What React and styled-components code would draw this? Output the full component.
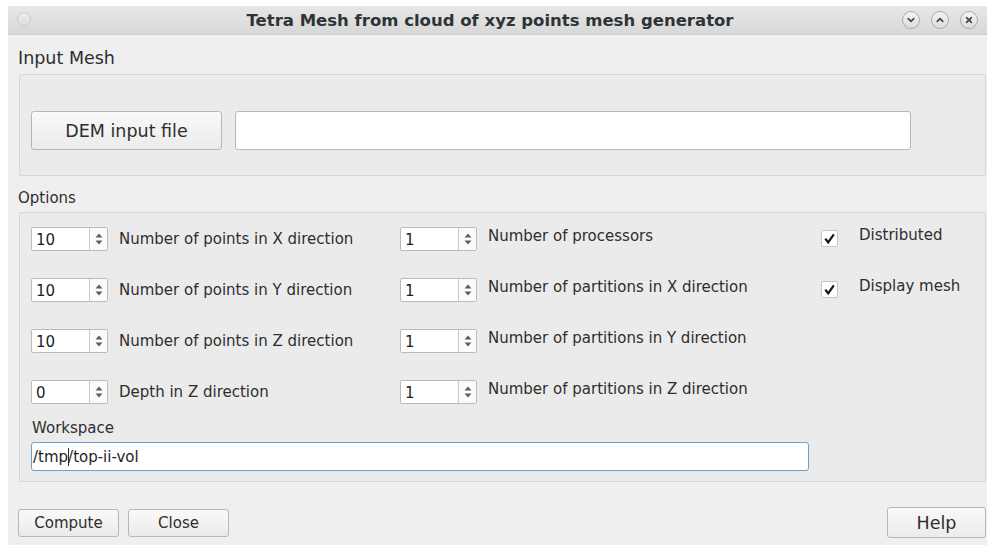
import React from 'react';
import styled, { createGlobalStyle } from 'styled-components';

const GlobalStyle = createGlobalStyle`
  html, body { margin: 0; padding: 0; background: #ffffff; }
  body {
    font-family: "DejaVu Sans", "Liberation Sans", sans-serif;
    color: #2e2e2e;
    overflow: hidden;
  }
  #root { padding: 6px 0 0 8px; }
`;

const Window = styled.div`
  width: 979px;
  height: 539px;
  background: #efefef;
  display: flex;
  flex-direction: column;
  overflow: hidden;
`;

const TitleBar = styled.div`
  box-sizing: border-box;
  height: 29px;
  flex: none;
  display: flex;
  align-items: center;
  background: linear-gradient(#e7e7e7, #d8d8d8);
  border-bottom: 1px solid #cfcfcf;
`;

const TitleSide = styled.div`
  flex: none;
  width: ${p => p.$width}px;
  display: flex;
  align-items: center;
  justify-content: ${p => (p.$end ? 'flex-end' : 'flex-start')};
  gap: 11px;
  padding: ${p => (p.$end ? '0 9px 0 0' : '0 0 0 9px')};
  box-sizing: border-box;
`;

const MenuDot = styled.div`
  width: 14px;
  height: 14px;
  border-radius: 50%;
  border: 1px solid #cbcbcb;
  background: linear-gradient(#ececec, #e0e0e0);
  box-sizing: border-box;
  margin-top: -3px;
`;

const Title = styled.div`
  flex: 1;
  text-align: center;
  font-weight: bold;
  font-size: 16.5px;
  color: #2e3436;
  white-space: nowrap;
`;

const WinButton = styled.div`
  width: 18px;
  height: 18px;
  border-radius: 50%;
  border: 1px solid #ababab;
  background: linear-gradient(#f3f3f3, #dcdcdc);
  box-sizing: border-box;
  display: flex;
  align-items: center;
  justify-content: center;
  svg { display: block; }
`;

const Content = styled.div`
  flex: 1;
  display: flex;
  flex-direction: column;
  padding: 13px 0 0 10px;
`;

const SectionLabel = styled.div`
  font-size: ${p => p.$size}px;
  line-height: ${p => Math.round(p.$size * 1.17)}px;
  margin-top: ${p => p.$top || 0}px;
  padding-left: ${p => p.$indent || 0}px;
  color: #2e2e2e;
`;

const GroupPanel = styled.div`
  box-sizing: border-box;
  margin: ${p => p.$top}px 1px 0 1px;
  background: #ebebeb;
  border: 1px solid #d6d6d6;
  border-radius: 2px;
  padding: ${p => p.$pad};
  display: flex;
  flex-direction: ${p => p.$dir || 'row'};
  align-items: ${p => (p.$dir === 'column' ? 'flex-start' : 'center')};
  gap: ${p => p.$gap || 0}px;
`;

const PushButton = styled.button`
  box-sizing: border-box;
  width: ${p => p.$w}px;
  height: ${p => p.$h}px;
  font-family: inherit;
  font-size: ${p => p.$size}px;
  color: #2e2e2e;
  background: linear-gradient(#f9f9f9, #ebebeb);
  border: 1px solid #b7b7b7;
  border-radius: 3px;
  padding: 0;
  margin-left: ${p => p.$ml || 0}px;
  flex: none;
`;

const TextField = styled.div`
  box-sizing: border-box;
  width: ${p => p.$w}px;
  height: ${p => p.$h}px;
  background: #ffffff;
  border: 1px solid ${p => (p.$focused ? '#6d9fd0' : '#b9b9b9')};
  border-radius: 3px;
  font-size: 15px;
  color: #1e1e1e;
  display: flex;
  align-items: center;
  padding-left: 1px;
  flex: none;
  margin-top: ${p => p.$top || 0}px;
  margin-left: ${p => p.$indent || 0}px;
`;

const Caret = styled.span`
  display: inline-block;
  width: 1px;
  height: 18px;
  background: #2a2a2a;
  vertical-align: -4px;
  margin-right: -1px;
`;

const OptionsGrid = styled.div`
  display: grid;
  grid-template-columns: 369px 420px 140px;
  grid-auto-rows: 24px;
  row-gap: 27px;
  padding-left: 11px;
`;

const Field = styled.div`
  display: flex;
  align-items: ${p => (p.$raised ? 'flex-start' : 'center')};
  gap: 11px;
`;

const FieldLabel = styled.span`
  font-size: 15px;
  line-height: 18px;
  white-space: nowrap;
  margin-top: ${p => p.$shift || 0}px;
  color: #2e2e2e;
`;

const SpinBox = styled.div`
  box-sizing: border-box;
  width: 77px;
  height: 24px;
  flex: none;
  background: #ffffff;
  border: 1px solid #bbbbbb;
  border-radius: 2px;
  display: flex;
`;

const SpinValue = styled.div`
  flex: 1;
  font-size: 15px;
  padding: 3px 0 0 4px;
  color: #1e1e1e;
`;

const SpinArrows = styled.div`
  width: 17px;
  border-left: 1px solid #c9c9c9;
  display: flex;
  align-items: center;
  justify-content: center;
  background: #fbfbfb;
  svg { display: block; }
`;

const CheckField = styled.div`
  display: flex;
  align-items: flex-start;
  gap: 21px;
  padding-left: 1px;
`;

const CheckBox = styled.div`
  box-sizing: border-box;
  width: 17px;
  height: 17px;
  margin-top: 3px;
  flex: none;
  background: #ffffff;
  border: 1px solid #c6c6c6;
  border-radius: 2px;
  display: flex;
  align-items: center;
  justify-content: center;
  svg { display: block; }
`;

const Footer = styled.div`
  display: flex;
  align-items: center;
  margin-top: 25px;
  padding-right: 1px;
`;

const Spacer = styled.div`
  flex: 1;
`;

const ChevronDown = () => (
  <svg width="10" height="10" viewBox="0 0 10 10">
    <path d="M2.2 3.6 L5 6.4 L7.8 3.6" fill="none" stroke="#444" strokeWidth="1.6" strokeLinecap="round" strokeLinejoin="round" />
  </svg>
);

const ChevronUp = () => (
  <svg width="10" height="10" viewBox="0 0 10 10">
    <path d="M2.2 6.4 L5 3.6 L7.8 6.4" fill="none" stroke="#444" strokeWidth="1.6" strokeLinecap="round" strokeLinejoin="round" />
  </svg>
);

const CloseMark = () => (
  <svg width="10" height="10" viewBox="0 0 10 10">
    <path d="M2.6 2.6 L7.4 7.4 M7.4 2.6 L2.6 7.4" fill="none" stroke="#444" strokeWidth="1.6" strokeLinecap="round" />
  </svg>
);

const SpinGlyph = () => (
  <svg width="10" height="16" viewBox="0 0 10 16">
    <path d="M1.5 6.6 L5 2.6 L8.5 6.6 Z" fill="#5e5e5e" />
    <path d="M1.5 9.4 L5 13.4 L8.5 9.4 Z" fill="#5e5e5e" />
  </svg>
);

const Tick = () => (
  <svg width="13" height="13" viewBox="0 0 13 13">
    <path d="M2.3 6.6 L5.2 10.4 L10.8 2.4" fill="none" stroke="#151515" strokeWidth="2.2" strokeLinejoin="miter" />
  </svg>
);

const Spin = ({ value }) => (
  <SpinBox>
    <SpinValue>{value}</SpinValue>
    <SpinArrows>
      <SpinGlyph />
    </SpinArrows>
  </SpinBox>
);

const SpinField = ({ value, label, raised }) => (
  <Field $raised={raised}>
    <Spin value={value} />
    <FieldLabel>{label}</FieldLabel>
  </Field>
);

const Check = ({ label }) => (
  <CheckField>
    <CheckBox>
      <Tick />
    </CheckBox>
    <FieldLabel $shift={-1}>{label}</FieldLabel>
  </CheckField>
);

const meshFields = [
  { value: '10', label: 'Number of points in X direction' },
  { value: '10', label: 'Number of points in Y direction' },
  { value: '10', label: 'Number of points in Z direction' },
  { value: '0', label: 'Depth in Z direction' },
];

const partitionFields = [
  { value: '1', label: 'Number of processors' },
  { value: '1', label: 'Number of partitions in X direction' },
  { value: '1', label: 'Number of partitions in Y direction' },
  { value: '1', label: 'Number of partitions in Z direction' },
];

const flags = ['Distributed', 'Display mesh'];

export default function App() {
  const rows = meshFields.map((m, i) => (
    <React.Fragment key={i}>
      <SpinField value={m.value} label={m.label} />
      <SpinField value={partitionFields[i].value} label={partitionFields[i].label} raised />
      {flags[i] ? <Check label={flags[i]} /> : <div />}
    </React.Fragment>
  ));

  return (
    <>
      <GlobalStyle />
      <Window>
        <TitleBar>
          <TitleSide $width={70}>
            <MenuDot />
          </TitleSide>
          <Title>Tetra Mesh from cloud of xyz points mesh generator</Title>
          <TitleSide $width={85} $end>
            <WinButton><ChevronDown /></WinButton>
            <WinButton><ChevronUp /></WinButton>
            <WinButton><CloseMark /></WinButton>
          </TitleSide>
        </TitleBar>

        <Content>
          <SectionLabel $size={17.5}>Input Mesh</SectionLabel>
          <GroupPanel $top={6} $pad="36px 74px 25px 11px" $gap={13}>
            <PushButton $w={191} $h={39} $size={17.5}>DEM input file</PushButton>
            <TextField $w={676} $h={39} />
          </GroupPanel>

          <SectionLabel $size={15} $top={13}>Options</SectionLabel>
          <GroupPanel $top={5} $pad="14px 0 10px 0" $dir="column">
            <OptionsGrid>{rows}</OptionsGrid>
            <SectionLabel $size={15} $top={15} $indent={12}>Workspace</SectionLabel>
            <TextField $w={778} $h={29} $top={5} $indent={11} $focused>
              <span>/tmp<Caret />/top-ii-vol</span>
            </TextField>
          </GroupPanel>

          <Footer>
            <PushButton $w={101} $h={28} $size={15}>Compute</PushButton>
            <PushButton $w={101} $h={28} $size={15} $ml={9}>Close</PushButton>
            <Spacer />
            <PushButton $w={99} $h={31} $size={17.5}>Help</PushButton>
          </Footer>
        </Content>
      </Window>
    </>
  );
}
